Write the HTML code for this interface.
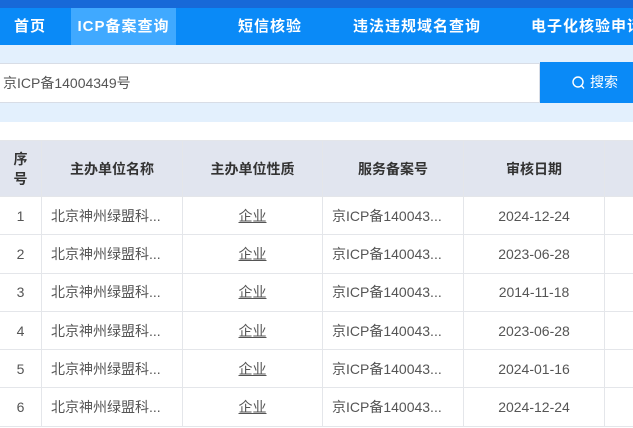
<!DOCTYPE html>
<html><head><meta charset="utf-8"><style>
*{margin:0;padding:0;box-sizing:border-box}
body{width:633px;height:428px;overflow:hidden;background:#fff;font-family:"Liberation Sans","Noto Sans CJK SC",sans-serif;position:relative}
.top{position:absolute;left:0;top:0;width:633px;height:8px;background:#1769d8}
.nav{position:absolute;left:0;top:8px;width:633px;height:37px;background:#0a8af7;white-space:nowrap}
.nav div{position:absolute;top:0;height:37px;line-height:37px;color:#fff;font-weight:bold;font-size:15px;letter-spacing:1px}
.band{position:absolute;left:0;top:45px;width:633px;height:77px;background:#e3f0fd}
.inp{position:absolute;left:0;top:63px;width:540px;height:40px;background:#fff;border:1px solid #d8dde6;border-left:none;font-size:14px;color:#555;line-height:38px;padding-left:3px}
.btn{position:absolute;left:540px;top:62px;width:93px;height:41px;background:#0a8af7;color:#fff;font-size:14px;line-height:41px;padding-left:50px}
table{position:absolute;left:-1px;top:140px;border-collapse:collapse;table-layout:fixed;width:666px}
td,th{border:1px solid #e4e6ea;text-align:center;font-size:14px;color:#555;height:38.3px;overflow:hidden;white-space:nowrap}
th{background:#e1e5ef;color:#333;font-weight:bold;height:56px;font-size:14px}
td.l{text-align:left;padding-left:9px}
td u{color:#555}
</style></head><body>
<div class="top"></div>
<div class="nav">
<div style="left:14px">首页</div>
<div style="left:71px;width:105px;background:#40a9ff;text-align:center">ICP备案查询</div>
<div style="left:238px">短信核验</div>
<div style="left:353px">违法违规域名查询</div>
<div style="left:531px">电子化核验申请</div>
</div>
<div class="band"></div>
<div class="inp">京ICP备14004349号</div>
<div class="btn"><svg style="position:absolute;left:32px;top:14px" width="13" height="14" viewBox="0 0 13 14"><circle cx="6" cy="6" r="5" fill="none" stroke="#fff" stroke-width="1.4"/><path d="M9.5 9.8L12 12.5" stroke="#fff" stroke-width="1.4"/></svg>搜索</div>
<table>
<colgroup><col style="width:42px"><col style="width:141px"><col style="width:140px"><col style="width:141px"><col style="width:141px"><col style="width:61px"></colgroup>
<tr><th>序<br>号</th><th>主办单位名称</th><th>主办单位性质</th><th>服务备案号</th><th>审核日期</th><th></th></tr>
<tr><td>1</td><td class="l">北京神州绿盟科...</td><td><u>企业</u></td><td class="l">京ICP备140043...</td><td>2024-12-24</td><td></td></tr>
<tr><td>2</td><td class="l">北京神州绿盟科...</td><td><u>企业</u></td><td class="l">京ICP备140043...</td><td>2023-06-28</td><td></td></tr>
<tr><td>3</td><td class="l">北京神州绿盟科...</td><td><u>企业</u></td><td class="l">京ICP备140043...</td><td>2014-11-18</td><td></td></tr>
<tr><td>4</td><td class="l">北京神州绿盟科...</td><td><u>企业</u></td><td class="l">京ICP备140043...</td><td>2023-06-28</td><td></td></tr>
<tr><td>5</td><td class="l">北京神州绿盟科...</td><td><u>企业</u></td><td class="l">京ICP备140043...</td><td>2024-01-16</td><td></td></tr>
<tr><td>6</td><td class="l">北京神州绿盟科...</td><td><u>企业</u></td><td class="l">京ICP备140043...</td><td>2024-12-24</td><td></td></tr>
</table>
</body></html>
